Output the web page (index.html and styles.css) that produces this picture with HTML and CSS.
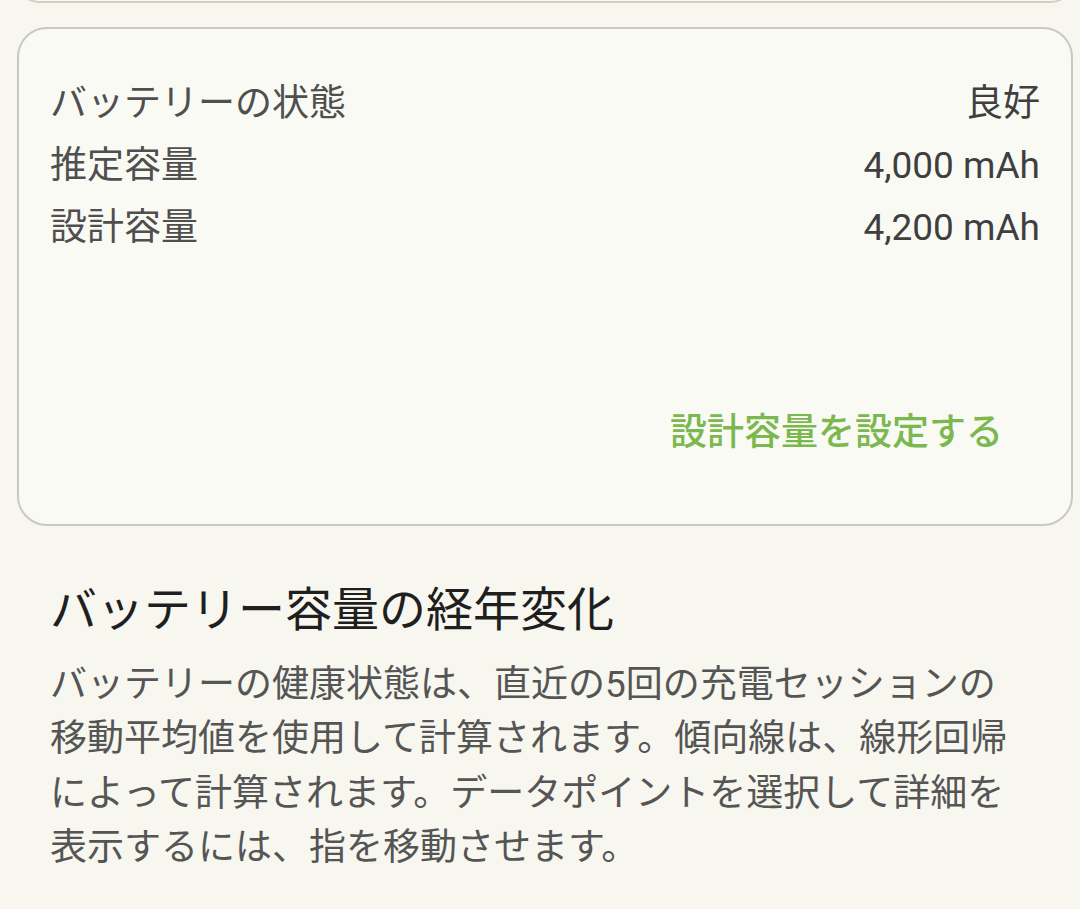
FILE: index.html
```html
<!DOCTYPE html>
<html lang="ja">
<head>
<meta charset="utf-8">
<link rel="stylesheet" href="styles.css">
</head>
<body>
<div class="prev-card"></div>
<section class="card">
  <div class="row"><span class="label">バッテリーの状態</span><span class="value">良好</span></div>
  <div class="row"><span class="label">推定容量</span><span class="value">4,000 mAh</span></div>
  <div class="row"><span class="label">設計容量</span><span class="value">4,200 mAh</span></div>
  <div class="actions"><span class="btn">設計容量を設定する</span></div>
</section>
<section class="info">
  <h2 class="title">バッテリー容量の経年変化</h2>
  <p class="desc">バッテリーの健康状態は、直近の5回の充電セッションの移動平均値を使用して計算されます。傾向線は、線形回帰によって計算されます。データポイントを選択して詳細を表示するには、指を移動させます。</p>
</section>
</body>
</html>
```
FILE: styles.css
```css
html, body {
  margin: 0;
  padding: 0;
  background: #f7f7ef;
}
body {
  padding: 0 7px 0 17px;
  font-family: Roboto, "Noto Sans CJK JP", sans-serif;
  overflow: hidden;
}
.prev-card {
  height: 40px;
  margin-top: -41px;
  border: 2px solid #cfcfc6;
  border-radius: 30px;
  background: #fafaf4;
}
.card {
  margin-top: 24px;
  border: 2px solid #c9c9c0;
  border-radius: 30px;
  background: #fafaf4;
  padding: 44px 31px 51px 31px;
}
.row {
  display: flex;
  justify-content: space-between;
  align-items: center;
  line-height: 62px;
  font-size: 37px;
  color: #4f4f4f;
}
.value {
  color: #3f3f3f;
}
.actions {
  display: flex;
  justify-content: flex-end;
  margin-top: 134px;
}
.btn {
  padding: 0 37px;
  line-height: 80px;
  font-size: 37px;
  font-weight: 500;
  color: #7bb84f;
}
.info {
  padding: 52px 0 0 33px;
}
.title {
  margin: 0;
  font-size: 47px;
  line-height: 64px;
  font-weight: 400;
  color: #1f1f1f;
}
.desc {
  margin: 16px 0 0 0;
  width: 976px;
  font-size: 37px;
  line-height: 54.3px;
  color: #555555;
}
```
